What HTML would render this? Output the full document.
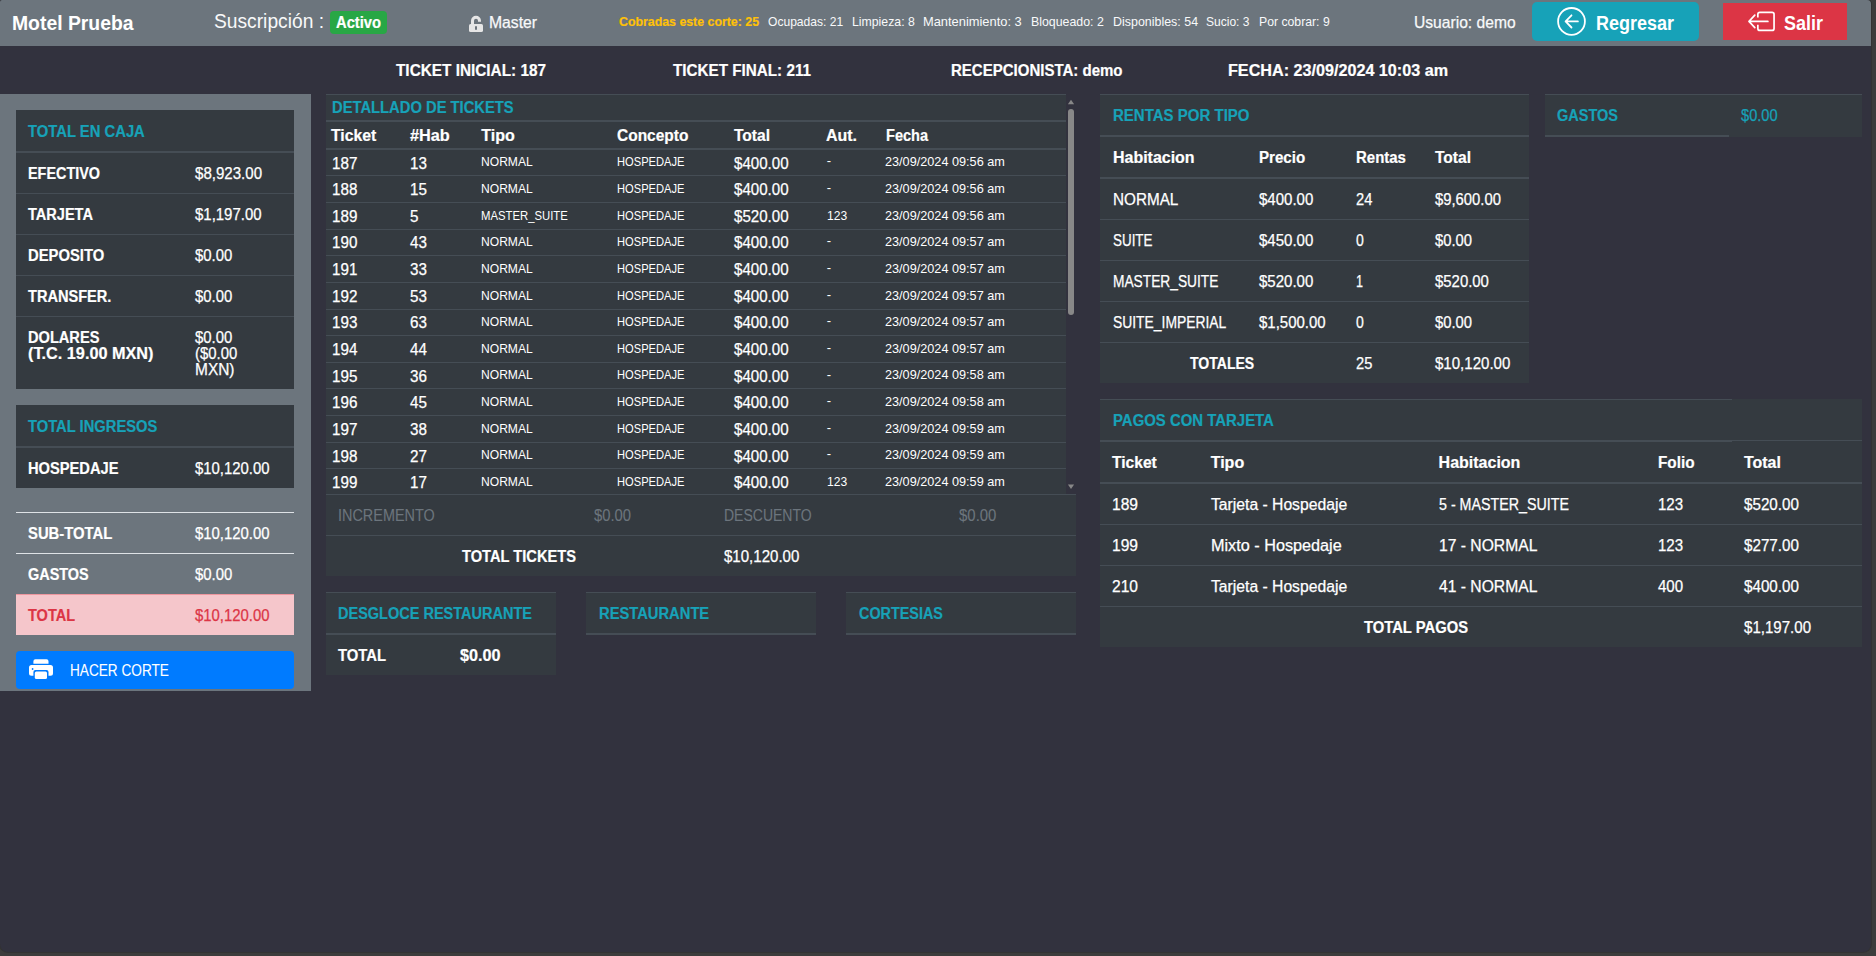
<!DOCTYPE html>
<html><head><meta charset="utf-8"><title>Corte</title>
<style>
html,body{margin:0;padding:0;}
body{width:1876px;height:956px;background:#3c3c3c;position:relative;overflow:hidden;font-family:"Liberation Sans",sans-serif;}
#win{position:absolute;left:0;top:0;width:1871px;height:952px;background:#32323e;border-radius:2px 4px 8px 8px;overflow:hidden;box-shadow:0 0 0 1px #333333;}
.r{position:absolute;}
.t{position:absolute;white-space:nowrap;line-height:1;transform-origin:0 0;}
</style></head><body><div id="win">
<div class="r" style="left:0px;top:0px;width:1871px;height:46px;background:#6c757d;"></div>
<div class="t" style="left:12.0px;top:13.00px;font-size:20px;font-weight:700;color:#fff;transform:scaleX(0.9676);">Motel Prueba</div>
<div class="t" style="left:214.0px;top:11.00px;font-size:20px;font-weight:400;color:#f8f9fa;transform:scaleX(0.9608);">Suscripción :</div>
<div class="r" style="left:330px;top:11px;width:57px;height:23px;background:#28a745;border-radius:4px;"></div>
<div class="t" style="left:335.6px;top:15.00px;font-size:16px;font-weight:700;color:#fff;transform:scaleX(0.9203);-webkit-text-stroke:0.2px #fff;">Activo</div>
<svg class="r" style="left:469px;top:15px" width="15" height="18" viewBox="0 0 15 18">
<path d="M3.5 9.5 V5.8 A3.5 3.5 0 0 1 10.5 5.8 V6.7" fill="none" stroke="#e6e6e6" stroke-width="3"/>
<rect x="0" y="9" width="14" height="8" rx="1.6" fill="#e6e6e6"/>
<rect x="6" y="11" width="2" height="4" rx="1" fill="#6c757d"/></svg>
<div class="t" style="left:489.0px;top:15.00px;font-size:16px;font-weight:400;color:#f8f9fa;transform:scaleX(0.9817);-webkit-text-stroke:0.25px #f8f9fa;">Master</div>
<div class="t" style="left:619.0px;top:15.00px;font-size:13px;font-weight:700;color:#ffc107;transform:scaleX(0.9499);-webkit-text-stroke:0.2px #ffc107;">Cobradas este corte: 25</div>
<div class="t" style="left:767.6px;top:15.00px;font-size:13px;font-weight:400;color:#f8f9fa;transform:scaleX(0.9291);">Ocupadas: 21</div>
<div class="t" style="left:851.6px;top:15.00px;font-size:13px;font-weight:400;color:#f8f9fa;transform:scaleX(0.9447);">Limpieza: 8</div>
<div class="t" style="left:923.2px;top:15.00px;font-size:13px;font-weight:400;color:#f8f9fa;transform:scaleX(0.9898);">Mantenimiento: 3</div>
<div class="t" style="left:1031.2px;top:15.00px;font-size:13px;font-weight:400;color:#f8f9fa;transform:scaleX(0.9502);">Bloqueado: 2</div>
<div class="t" style="left:1112.8px;top:15.00px;font-size:13px;font-weight:400;color:#f8f9fa;transform:scaleX(0.9575);">Disponibles: 54</div>
<div class="t" style="left:1206.0px;top:15.00px;font-size:13px;font-weight:400;color:#f8f9fa;transform:scaleX(0.9261);">Sucio: 3</div>
<div class="t" style="left:1258.5px;top:15.00px;font-size:13px;font-weight:400;color:#f8f9fa;transform:scaleX(0.9409);">Por cobrar: 9</div>
<div class="t" style="left:1414.4px;top:14.00px;font-size:17px;font-weight:400;color:#f8f9fa;transform:scaleX(0.9191);-webkit-text-stroke:0.25px #f8f9fa;">Usuario: demo</div>
<div class="r" style="left:1532px;top:2px;width:167px;height:39px;background:#17a2b8;border-radius:5px;"></div>
<svg class="r" style="left:1556px;top:6px" width="32" height="32" viewBox="0 0 32 32">
<circle cx="15.5" cy="15.4" r="13.4" fill="none" stroke="#fff" stroke-width="1.8"/>
<path d="M21.9 15.4 H9.6 M15.5 9.3 L9.6 15.4 L15.5 21.5" fill="none" stroke="#fff" stroke-width="1.8" stroke-linecap="round" stroke-linejoin="round"/></svg>
<div class="t" style="left:1596.0px;top:13.00px;font-size:20px;font-weight:700;color:#fff;transform:scaleX(0.8995);">Regresar</div>
<div class="r" style="left:1723px;top:3px;width:124px;height:37px;background:#dc3545;"></div>
<svg class="r" style="left:1746px;top:10px" width="32" height="24" viewBox="0 0 32 24">
<path d="M11.85 7.6 V4.35 A2 2 0 0 1 13.85 2.35 H26.05 A2 2 0 0 1 28.05 4.35 V18.45 A2 2 0 0 1 26.05 20.45 H13.85 A2 2 0 0 1 11.85 18.45 V14.8" fill="none" stroke="#fff" stroke-width="1.7"/>
<path d="M21.9 11.4 H3 M8.8 5.2 L3 11.4 L8.8 17.6" fill="none" stroke="#fff" stroke-width="1.7" stroke-linecap="round" stroke-linejoin="round"/></svg>
<div class="t" style="left:1784.0px;top:13.00px;font-size:20px;font-weight:700;color:#fff;transform:scaleX(0.8995);">Salir</div>
<div class="t" style="left:395.6px;top:63.00px;font-size:16px;font-weight:700;color:#fff;transform:scaleX(0.9587);-webkit-text-stroke:0.2px #fff;">TICKET INICIAL: 187</div>
<div class="t" style="left:672.6px;top:63.00px;font-size:16px;font-weight:700;color:#fff;transform:scaleX(0.9524);-webkit-text-stroke:0.2px #fff;">TICKET FINAL: 211</div>
<div class="t" style="left:950.5px;top:63.00px;font-size:16px;font-weight:700;color:#fff;transform:scaleX(0.9380);-webkit-text-stroke:0.2px #fff;">RECEPCIONISTA: demo</div>
<div class="t" style="left:1227.6px;top:63.00px;font-size:16px;font-weight:700;color:#fff;transform:scaleX(1.0097);-webkit-text-stroke:0.2px #fff;">FECHA: 23/09/2024 10:03 am</div>
<div class="r" style="left:0px;top:94px;width:311px;height:597px;background:#6c757d;"></div>
<div class="r" style="left:16px;top:110px;width:278px;height:279px;background:#343a40;"></div>
<div class="t" style="left:28.0px;top:124.00px;font-size:16px;font-weight:700;color:#17a2b8;transform:scaleX(0.9253);-webkit-text-stroke:0.2px #17a2b8;">TOTAL EN CAJA</div>
<div class="r" style="left:16px;top:151px;width:278px;height:2px;background:#454d55;"></div>
<div class="r" style="left:16px;top:193px;width:278px;height:1px;background:#454d55;"></div>
<div class="r" style="left:16px;top:234px;width:278px;height:1px;background:#454d55;"></div>
<div class="r" style="left:16px;top:275px;width:278px;height:1px;background:#454d55;"></div>
<div class="r" style="left:16px;top:316px;width:278px;height:1px;background:#454d55;"></div>
<div class="t" style="left:28.0px;top:166.00px;font-size:16px;font-weight:700;color:#fff;transform:scaleX(0.8999);-webkit-text-stroke:0.2px #fff;">EFECTIVO</div>
<div class="t" style="left:195.0px;top:166.00px;font-size:16px;font-weight:400;color:#fff;transform:scaleX(0.9414);-webkit-text-stroke:0.25px #fff;">$8,923.00</div>
<div class="t" style="left:28.0px;top:207.00px;font-size:16px;font-weight:700;color:#fff;transform:scaleX(0.9089);-webkit-text-stroke:0.2px #fff;">TARJETA</div>
<div class="t" style="left:195.0px;top:207.00px;font-size:16px;font-weight:400;color:#fff;transform:scaleX(0.9343);-webkit-text-stroke:0.25px #fff;">$1,197.00</div>
<div class="t" style="left:28.0px;top:248.00px;font-size:16px;font-weight:700;color:#fff;transform:scaleX(0.9249);-webkit-text-stroke:0.2px #fff;">DEPOSITO</div>
<div class="t" style="left:195.0px;top:248.00px;font-size:16px;font-weight:400;color:#fff;transform:scaleX(0.9317);-webkit-text-stroke:0.25px #fff;">$0.00</div>
<div class="t" style="left:28.0px;top:289.00px;font-size:16px;font-weight:700;color:#fff;transform:scaleX(0.9109);-webkit-text-stroke:0.2px #fff;">TRANSFER.</div>
<div class="t" style="left:195.0px;top:289.00px;font-size:16px;font-weight:400;color:#fff;transform:scaleX(0.9317);-webkit-text-stroke:0.25px #fff;">$0.00</div>
<div class="t" style="left:28.0px;top:330.00px;font-size:16px;font-weight:700;color:#fff;transform:scaleX(0.9127);-webkit-text-stroke:0.2px #fff;">DOLARES</div>
<div class="t" style="left:28.0px;top:346.00px;font-size:16px;font-weight:700;color:#fff;transform:scaleX(1.0155);-webkit-text-stroke:0.2px #fff;">(T.C. 19.00 MXN)</div>
<div class="t" style="left:195.0px;top:330.00px;font-size:16px;font-weight:400;color:#fff;transform:scaleX(0.9317);-webkit-text-stroke:0.25px #fff;">$0.00</div>
<div class="t" style="left:195.0px;top:346.00px;font-size:16px;font-weight:400;color:#fff;transform:scaleX(0.9303);-webkit-text-stroke:0.25px #fff;">($0.00</div>
<div class="t" style="left:195.0px;top:362.00px;font-size:16px;font-weight:400;color:#fff;transform:scaleX(0.9662);-webkit-text-stroke:0.25px #fff;">MXN)</div>
<div class="r" style="left:16px;top:405px;width:278px;height:83px;background:#343a40;"></div>
<div class="t" style="left:28.0px;top:419.00px;font-size:16px;font-weight:700;color:#17a2b8;transform:scaleX(0.9213);-webkit-text-stroke:0.2px #17a2b8;">TOTAL INGRESOS</div>
<div class="r" style="left:16px;top:446px;width:278px;height:2px;background:#454d55;"></div>
<div class="t" style="left:28.0px;top:461.00px;font-size:16px;font-weight:700;color:#fff;transform:scaleX(0.9169);-webkit-text-stroke:0.2px #fff;">HOSPEDAJE</div>
<div class="t" style="left:195.0px;top:461.00px;font-size:16px;font-weight:400;color:#fff;transform:scaleX(0.9304);-webkit-text-stroke:0.25px #fff;">$10,120.00</div>
<div class="r" style="left:16px;top:512px;width:278px;height:1px;background:#dee2e6;"></div>
<div class="r" style="left:16px;top:553px;width:278px;height:1px;background:#dee2e6;"></div>
<div class="t" style="left:28.0px;top:526.00px;font-size:16px;font-weight:700;color:#fff;transform:scaleX(0.9269);-webkit-text-stroke:0.2px #fff;">SUB-TOTAL</div>
<div class="t" style="left:195.0px;top:526.00px;font-size:16px;font-weight:400;color:#fff;transform:scaleX(0.9304);-webkit-text-stroke:0.25px #fff;">$10,120.00</div>
<div class="t" style="left:28.0px;top:567.00px;font-size:16px;font-weight:700;color:#fff;transform:scaleX(0.9023);-webkit-text-stroke:0.2px #fff;">GASTOS</div>
<div class="t" style="left:195.0px;top:567.00px;font-size:16px;font-weight:400;color:#fff;transform:scaleX(0.9317);-webkit-text-stroke:0.25px #fff;">$0.00</div>
<div class="r" style="left:16px;top:594px;width:278px;height:41px;background:#f5c6cb;border-top:1px solid #ed969e;box-sizing:border-box;"></div>
<div class="t" style="left:28.0px;top:608.00px;font-size:16px;font-weight:700;color:#dc3545;transform:scaleX(0.9066);-webkit-text-stroke:0.2px #dc3545;">TOTAL</div>
<div class="t" style="left:195.0px;top:608.00px;font-size:16px;font-weight:400;color:#dc3545;transform:scaleX(0.9304);-webkit-text-stroke:0.25px #dc3545;">$10,120.00</div>
<div class="r" style="left:16px;top:651px;width:278px;height:38px;background:#007bff;border-radius:4px;"></div>
<svg class="r" style="left:29px;top:659px" width="24" height="21" viewBox="0 0 24 21">
<path d="M4.4 4.7 V2.3 A2 2 0 0 1 6.4 0.3 H17.5 A2 2 0 0 1 19.5 2.3 V4.7 Z" fill="#fff"/>
<path d="M2.5 6.1 H21.5 A2.5 2.5 0 0 1 24 8.6 V14.3 A2.5 2.5 0 0 1 21.5 16.8 H19.5 V13 A2 2 0 0 0 17.5 11 H6.4 A2 2 0 0 0 4.4 13 V16.8 H2.5 A2.5 2.5 0 0 1 0 14.3 V8.6 A2.5 2.5 0 0 1 2.5 6.1 Z" fill="#fff"/>
<rect x="5.8" y="12.6" width="12.2" height="7.4" rx="1.5" fill="#fff"/>
<circle cx="3.6" cy="10" r="0.9" fill="#007bff"/></svg>
<div class="t" style="left:70.0px;top:663.00px;font-size:16px;font-weight:400;color:#fff;transform:scaleX(0.8514);-webkit-text-stroke:0.1px #fff;">HACER CORTE</div>
<div class="r" style="left:326px;top:94px;width:740px;height:400px;background:#343a40;"></div>
<div class="r" style="left:326px;top:94px;width:740px;height:1px;background:#454d55;"></div>
<div class="t" style="left:331.7px;top:100.00px;font-size:16px;font-weight:700;color:#17a2b8;transform:scaleX(0.9222);-webkit-text-stroke:0.2px #17a2b8;">DETALLADO DE TICKETS</div>
<div class="r" style="left:326px;top:120px;width:740px;height:2px;background:#454d55;"></div>
<div class="t" style="left:331.0px;top:128.00px;font-size:16px;font-weight:700;color:#fff;transform:scaleX(0.9837);-webkit-text-stroke:0.2px #fff;">Ticket</div>
<div class="t" style="left:409.7px;top:128.00px;font-size:16px;font-weight:700;color:#fff;transform:scaleX(1.0148);-webkit-text-stroke:0.2px #fff;">#Hab</div>
<div class="t" style="left:481.3px;top:128.00px;font-size:16px;font-weight:700;color:#fff;-webkit-text-stroke:0.2px #fff;">Tipo</div>
<div class="t" style="left:616.7px;top:128.00px;font-size:16px;font-weight:700;color:#fff;transform:scaleX(0.9679);-webkit-text-stroke:0.2px #fff;">Concepto</div>
<div class="t" style="left:733.5px;top:128.00px;font-size:16px;font-weight:700;color:#fff;transform:scaleX(0.9723);-webkit-text-stroke:0.2px #fff;">Total</div>
<div class="t" style="left:826.4px;top:128.00px;font-size:16px;font-weight:700;color:#fff;transform:scaleX(0.9968);-webkit-text-stroke:0.2px #fff;">Aut.</div>
<div class="t" style="left:885.5px;top:128.00px;font-size:16px;font-weight:700;color:#fff;transform:scaleX(0.9084);-webkit-text-stroke:0.2px #fff;">Fecha</div>
<div class="r" style="left:326px;top:148px;width:740px;height:2px;background:#454d55;"></div>
<div class="t" style="left:331.8px;top:156.00px;font-size:16px;font-weight:400;color:#fff;transform:scaleX(0.9500);-webkit-text-stroke:0.25px #fff;">187</div>
<div class="t" style="left:409.7px;top:156.00px;font-size:16px;font-weight:400;color:#fff;transform:scaleX(0.9500);-webkit-text-stroke:0.25px #fff;">13</div>
<div class="t" style="left:481.3px;top:155.00px;font-size:13px;font-weight:400;color:#fff;transform:scaleX(0.9300);">NORMAL</div>
<div class="t" style="left:616.7px;top:155.00px;font-size:13px;font-weight:400;color:#fff;transform:scaleX(0.8572);">HOSPEDAJE</div>
<div class="t" style="left:733.5px;top:156.00px;font-size:16px;font-weight:400;color:#fff;transform:scaleX(0.9441);-webkit-text-stroke:0.25px #fff;">$400.00</div>
<div class="t" style="left:826.8px;top:154.00px;font-size:13px;font-weight:400;color:#fff;">-</div>
<div class="t" style="left:884.8px;top:155.00px;font-size:13px;font-weight:400;color:#fff;transform:scaleX(0.9750);">23/09/2024 09:56 am</div>
<div class="r" style="left:326px;top:175px;width:740px;height:1px;background:#454d55;"></div>
<div class="t" style="left:331.8px;top:182.00px;font-size:16px;font-weight:400;color:#fff;transform:scaleX(0.9500);-webkit-text-stroke:0.25px #fff;">188</div>
<div class="t" style="left:409.7px;top:182.00px;font-size:16px;font-weight:400;color:#fff;transform:scaleX(0.9500);-webkit-text-stroke:0.25px #fff;">15</div>
<div class="t" style="left:481.3px;top:182.00px;font-size:13px;font-weight:400;color:#fff;transform:scaleX(0.9300);">NORMAL</div>
<div class="t" style="left:616.7px;top:182.00px;font-size:13px;font-weight:400;color:#fff;transform:scaleX(0.8572);">HOSPEDAJE</div>
<div class="t" style="left:733.5px;top:182.00px;font-size:16px;font-weight:400;color:#fff;transform:scaleX(0.9441);-webkit-text-stroke:0.25px #fff;">$400.00</div>
<div class="t" style="left:826.8px;top:181.00px;font-size:13px;font-weight:400;color:#fff;">-</div>
<div class="t" style="left:884.8px;top:182.00px;font-size:13px;font-weight:400;color:#fff;transform:scaleX(0.9750);">23/09/2024 09:56 am</div>
<div class="r" style="left:326px;top:202px;width:740px;height:1px;background:#454d55;"></div>
<div class="t" style="left:331.8px;top:209.00px;font-size:16px;font-weight:400;color:#fff;transform:scaleX(0.9500);-webkit-text-stroke:0.25px #fff;">189</div>
<div class="t" style="left:409.7px;top:209.00px;font-size:16px;font-weight:400;color:#fff;transform:scaleX(0.9500);-webkit-text-stroke:0.25px #fff;">5</div>
<div class="t" style="left:481.3px;top:209.00px;font-size:13px;font-weight:400;color:#fff;transform:scaleX(0.8700);">MASTER_SUITE</div>
<div class="t" style="left:616.7px;top:209.00px;font-size:13px;font-weight:400;color:#fff;transform:scaleX(0.8572);">HOSPEDAJE</div>
<div class="t" style="left:733.5px;top:209.00px;font-size:16px;font-weight:400;color:#fff;transform:scaleX(0.9441);-webkit-text-stroke:0.25px #fff;">$520.00</div>
<div class="t" style="left:826.8px;top:209.00px;font-size:13px;font-weight:400;color:#fff;transform:scaleX(0.9300);">123</div>
<div class="t" style="left:884.8px;top:209.00px;font-size:13px;font-weight:400;color:#fff;transform:scaleX(0.9750);">23/09/2024 09:56 am</div>
<div class="r" style="left:326px;top:229px;width:740px;height:1px;background:#454d55;"></div>
<div class="t" style="left:331.8px;top:235.00px;font-size:16px;font-weight:400;color:#fff;transform:scaleX(0.9500);-webkit-text-stroke:0.25px #fff;">190</div>
<div class="t" style="left:409.7px;top:235.00px;font-size:16px;font-weight:400;color:#fff;transform:scaleX(0.9500);-webkit-text-stroke:0.25px #fff;">43</div>
<div class="t" style="left:481.3px;top:235.00px;font-size:13px;font-weight:400;color:#fff;transform:scaleX(0.9300);">NORMAL</div>
<div class="t" style="left:616.7px;top:235.00px;font-size:13px;font-weight:400;color:#fff;transform:scaleX(0.8572);">HOSPEDAJE</div>
<div class="t" style="left:733.5px;top:235.00px;font-size:16px;font-weight:400;color:#fff;transform:scaleX(0.9441);-webkit-text-stroke:0.25px #fff;">$400.00</div>
<div class="t" style="left:826.8px;top:234.00px;font-size:13px;font-weight:400;color:#fff;">-</div>
<div class="t" style="left:884.8px;top:235.00px;font-size:13px;font-weight:400;color:#fff;transform:scaleX(0.9750);">23/09/2024 09:57 am</div>
<div class="r" style="left:326px;top:255px;width:740px;height:1px;background:#454d55;"></div>
<div class="t" style="left:331.8px;top:262.00px;font-size:16px;font-weight:400;color:#fff;transform:scaleX(0.9500);-webkit-text-stroke:0.25px #fff;">191</div>
<div class="t" style="left:409.7px;top:262.00px;font-size:16px;font-weight:400;color:#fff;transform:scaleX(0.9500);-webkit-text-stroke:0.25px #fff;">33</div>
<div class="t" style="left:481.3px;top:262.00px;font-size:13px;font-weight:400;color:#fff;transform:scaleX(0.9300);">NORMAL</div>
<div class="t" style="left:616.7px;top:262.00px;font-size:13px;font-weight:400;color:#fff;transform:scaleX(0.8572);">HOSPEDAJE</div>
<div class="t" style="left:733.5px;top:262.00px;font-size:16px;font-weight:400;color:#fff;transform:scaleX(0.9441);-webkit-text-stroke:0.25px #fff;">$400.00</div>
<div class="t" style="left:826.8px;top:261.00px;font-size:13px;font-weight:400;color:#fff;">-</div>
<div class="t" style="left:884.8px;top:262.00px;font-size:13px;font-weight:400;color:#fff;transform:scaleX(0.9750);">23/09/2024 09:57 am</div>
<div class="r" style="left:326px;top:282px;width:740px;height:1px;background:#454d55;"></div>
<div class="t" style="left:331.8px;top:289.00px;font-size:16px;font-weight:400;color:#fff;transform:scaleX(0.9500);-webkit-text-stroke:0.25px #fff;">192</div>
<div class="t" style="left:409.7px;top:289.00px;font-size:16px;font-weight:400;color:#fff;transform:scaleX(0.9500);-webkit-text-stroke:0.25px #fff;">53</div>
<div class="t" style="left:481.3px;top:289.00px;font-size:13px;font-weight:400;color:#fff;transform:scaleX(0.9300);">NORMAL</div>
<div class="t" style="left:616.7px;top:289.00px;font-size:13px;font-weight:400;color:#fff;transform:scaleX(0.8572);">HOSPEDAJE</div>
<div class="t" style="left:733.5px;top:289.00px;font-size:16px;font-weight:400;color:#fff;transform:scaleX(0.9441);-webkit-text-stroke:0.25px #fff;">$400.00</div>
<div class="t" style="left:826.8px;top:288.00px;font-size:13px;font-weight:400;color:#fff;">-</div>
<div class="t" style="left:884.8px;top:289.00px;font-size:13px;font-weight:400;color:#fff;transform:scaleX(0.9750);">23/09/2024 09:57 am</div>
<div class="r" style="left:326px;top:309px;width:740px;height:1px;background:#454d55;"></div>
<div class="t" style="left:331.8px;top:315.00px;font-size:16px;font-weight:400;color:#fff;transform:scaleX(0.9500);-webkit-text-stroke:0.25px #fff;">193</div>
<div class="t" style="left:409.7px;top:315.00px;font-size:16px;font-weight:400;color:#fff;transform:scaleX(0.9500);-webkit-text-stroke:0.25px #fff;">63</div>
<div class="t" style="left:481.3px;top:315.00px;font-size:13px;font-weight:400;color:#fff;transform:scaleX(0.9300);">NORMAL</div>
<div class="t" style="left:616.7px;top:315.00px;font-size:13px;font-weight:400;color:#fff;transform:scaleX(0.8572);">HOSPEDAJE</div>
<div class="t" style="left:733.5px;top:315.00px;font-size:16px;font-weight:400;color:#fff;transform:scaleX(0.9441);-webkit-text-stroke:0.25px #fff;">$400.00</div>
<div class="t" style="left:826.8px;top:314.00px;font-size:13px;font-weight:400;color:#fff;">-</div>
<div class="t" style="left:884.8px;top:315.00px;font-size:13px;font-weight:400;color:#fff;transform:scaleX(0.9750);">23/09/2024 09:57 am</div>
<div class="r" style="left:326px;top:335px;width:740px;height:1px;background:#454d55;"></div>
<div class="t" style="left:331.8px;top:342.00px;font-size:16px;font-weight:400;color:#fff;transform:scaleX(0.9500);-webkit-text-stroke:0.25px #fff;">194</div>
<div class="t" style="left:409.7px;top:342.00px;font-size:16px;font-weight:400;color:#fff;transform:scaleX(0.9500);-webkit-text-stroke:0.25px #fff;">44</div>
<div class="t" style="left:481.3px;top:342.00px;font-size:13px;font-weight:400;color:#fff;transform:scaleX(0.9300);">NORMAL</div>
<div class="t" style="left:616.7px;top:342.00px;font-size:13px;font-weight:400;color:#fff;transform:scaleX(0.8572);">HOSPEDAJE</div>
<div class="t" style="left:733.5px;top:342.00px;font-size:16px;font-weight:400;color:#fff;transform:scaleX(0.9441);-webkit-text-stroke:0.25px #fff;">$400.00</div>
<div class="t" style="left:826.8px;top:341.00px;font-size:13px;font-weight:400;color:#fff;">-</div>
<div class="t" style="left:884.8px;top:342.00px;font-size:13px;font-weight:400;color:#fff;transform:scaleX(0.9750);">23/09/2024 09:57 am</div>
<div class="r" style="left:326px;top:362px;width:740px;height:1px;background:#454d55;"></div>
<div class="t" style="left:331.8px;top:369.00px;font-size:16px;font-weight:400;color:#fff;transform:scaleX(0.9500);-webkit-text-stroke:0.25px #fff;">195</div>
<div class="t" style="left:409.7px;top:369.00px;font-size:16px;font-weight:400;color:#fff;transform:scaleX(0.9500);-webkit-text-stroke:0.25px #fff;">36</div>
<div class="t" style="left:481.3px;top:368.00px;font-size:13px;font-weight:400;color:#fff;transform:scaleX(0.9300);">NORMAL</div>
<div class="t" style="left:616.7px;top:368.00px;font-size:13px;font-weight:400;color:#fff;transform:scaleX(0.8572);">HOSPEDAJE</div>
<div class="t" style="left:733.5px;top:369.00px;font-size:16px;font-weight:400;color:#fff;transform:scaleX(0.9441);-webkit-text-stroke:0.25px #fff;">$400.00</div>
<div class="t" style="left:826.8px;top:368.00px;font-size:13px;font-weight:400;color:#fff;">-</div>
<div class="t" style="left:884.8px;top:368.00px;font-size:13px;font-weight:400;color:#fff;transform:scaleX(0.9750);">23/09/2024 09:58 am</div>
<div class="r" style="left:326px;top:388px;width:740px;height:1px;background:#454d55;"></div>
<div class="t" style="left:331.8px;top:395.00px;font-size:16px;font-weight:400;color:#fff;transform:scaleX(0.9500);-webkit-text-stroke:0.25px #fff;">196</div>
<div class="t" style="left:409.7px;top:395.00px;font-size:16px;font-weight:400;color:#fff;transform:scaleX(0.9500);-webkit-text-stroke:0.25px #fff;">45</div>
<div class="t" style="left:481.3px;top:395.00px;font-size:13px;font-weight:400;color:#fff;transform:scaleX(0.9300);">NORMAL</div>
<div class="t" style="left:616.7px;top:395.00px;font-size:13px;font-weight:400;color:#fff;transform:scaleX(0.8572);">HOSPEDAJE</div>
<div class="t" style="left:733.5px;top:395.00px;font-size:16px;font-weight:400;color:#fff;transform:scaleX(0.9441);-webkit-text-stroke:0.25px #fff;">$400.00</div>
<div class="t" style="left:826.8px;top:394.00px;font-size:13px;font-weight:400;color:#fff;">-</div>
<div class="t" style="left:884.8px;top:395.00px;font-size:13px;font-weight:400;color:#fff;transform:scaleX(0.9750);">23/09/2024 09:58 am</div>
<div class="r" style="left:326px;top:415px;width:740px;height:1px;background:#454d55;"></div>
<div class="t" style="left:331.8px;top:422.00px;font-size:16px;font-weight:400;color:#fff;transform:scaleX(0.9500);-webkit-text-stroke:0.25px #fff;">197</div>
<div class="t" style="left:409.7px;top:422.00px;font-size:16px;font-weight:400;color:#fff;transform:scaleX(0.9500);-webkit-text-stroke:0.25px #fff;">38</div>
<div class="t" style="left:481.3px;top:422.00px;font-size:13px;font-weight:400;color:#fff;transform:scaleX(0.9300);">NORMAL</div>
<div class="t" style="left:616.7px;top:422.00px;font-size:13px;font-weight:400;color:#fff;transform:scaleX(0.8572);">HOSPEDAJE</div>
<div class="t" style="left:733.5px;top:422.00px;font-size:16px;font-weight:400;color:#fff;transform:scaleX(0.9441);-webkit-text-stroke:0.25px #fff;">$400.00</div>
<div class="t" style="left:826.8px;top:421.00px;font-size:13px;font-weight:400;color:#fff;">-</div>
<div class="t" style="left:884.8px;top:422.00px;font-size:13px;font-weight:400;color:#fff;transform:scaleX(0.9750);">23/09/2024 09:59 am</div>
<div class="r" style="left:326px;top:442px;width:740px;height:1px;background:#454d55;"></div>
<div class="t" style="left:331.8px;top:449.00px;font-size:16px;font-weight:400;color:#fff;transform:scaleX(0.9500);-webkit-text-stroke:0.25px #fff;">198</div>
<div class="t" style="left:409.7px;top:449.00px;font-size:16px;font-weight:400;color:#fff;transform:scaleX(0.9500);-webkit-text-stroke:0.25px #fff;">27</div>
<div class="t" style="left:481.3px;top:448.00px;font-size:13px;font-weight:400;color:#fff;transform:scaleX(0.9300);">NORMAL</div>
<div class="t" style="left:616.7px;top:448.00px;font-size:13px;font-weight:400;color:#fff;transform:scaleX(0.8572);">HOSPEDAJE</div>
<div class="t" style="left:733.5px;top:449.00px;font-size:16px;font-weight:400;color:#fff;transform:scaleX(0.9441);-webkit-text-stroke:0.25px #fff;">$400.00</div>
<div class="t" style="left:826.8px;top:447.00px;font-size:13px;font-weight:400;color:#fff;">-</div>
<div class="t" style="left:884.8px;top:448.00px;font-size:13px;font-weight:400;color:#fff;transform:scaleX(0.9750);">23/09/2024 09:59 am</div>
<div class="r" style="left:326px;top:468px;width:740px;height:1px;background:#454d55;"></div>
<div class="t" style="left:331.8px;top:475.00px;font-size:16px;font-weight:400;color:#fff;transform:scaleX(0.9500);-webkit-text-stroke:0.25px #fff;">199</div>
<div class="t" style="left:409.7px;top:475.00px;font-size:16px;font-weight:400;color:#fff;transform:scaleX(0.9500);-webkit-text-stroke:0.25px #fff;">17</div>
<div class="t" style="left:481.3px;top:475.00px;font-size:13px;font-weight:400;color:#fff;transform:scaleX(0.9300);">NORMAL</div>
<div class="t" style="left:616.7px;top:475.00px;font-size:13px;font-weight:400;color:#fff;transform:scaleX(0.8572);">HOSPEDAJE</div>
<div class="t" style="left:733.5px;top:475.00px;font-size:16px;font-weight:400;color:#fff;transform:scaleX(0.9441);-webkit-text-stroke:0.25px #fff;">$400.00</div>
<div class="t" style="left:826.8px;top:475.00px;font-size:13px;font-weight:400;color:#fff;transform:scaleX(0.9300);">123</div>
<div class="t" style="left:884.8px;top:475.00px;font-size:13px;font-weight:400;color:#fff;transform:scaleX(0.9750);">23/09/2024 09:59 am</div>
<svg class="r" style="left:1066px;top:94px" width="10" height="400" viewBox="0 0 10 400"><path d="M1.9 10.2 L5 5.7 L8.1 10.2 Z" fill="#888"/><rect x="2" y="15" width="6" height="206" rx="3" fill="#888"/><path d="M1.9 390.6 L5 395.1 L8.1 390.6 Z" fill="#888"/></svg>
<div class="r" style="left:326px;top:494px;width:750px;height:82px;background:#343a40;"></div>
<div class="r" style="left:326px;top:494px;width:750px;height:1px;background:#454d55;"></div>
<div class="r" style="left:326px;top:535px;width:750px;height:1px;background:#454d55;"></div>
<div class="t" style="left:338.4px;top:508.00px;font-size:16px;font-weight:400;color:#6c757d;transform:scaleX(0.9015);-webkit-text-stroke:0.1px #6c757d;">INCREMENTO</div>
<div class="t" style="left:594.0px;top:508.00px;font-size:16px;font-weight:400;color:#6c757d;transform:scaleX(0.9267);-webkit-text-stroke:0.1px #6c757d;">$0.00</div>
<div class="t" style="left:723.5px;top:508.00px;font-size:16px;font-weight:400;color:#6c757d;transform:scaleX(0.8746);-webkit-text-stroke:0.1px #6c757d;">DESCUENTO</div>
<div class="t" style="left:958.8px;top:508.00px;font-size:16px;font-weight:400;color:#6c757d;transform:scaleX(0.9342);-webkit-text-stroke:0.1px #6c757d;">$0.00</div>
<div class="t" style="left:461.5px;top:549.00px;font-size:16px;font-weight:700;color:#fff;transform:scaleX(0.9161);-webkit-text-stroke:0.2px #fff;">TOTAL TICKETS</div>
<div class="t" style="left:723.5px;top:549.00px;font-size:16px;font-weight:400;color:#fff;transform:scaleX(0.9404);-webkit-text-stroke:0.25px #fff;">$10,120.00</div>
<div class="r" style="left:326px;top:592px;width:230px;height:83px;background:#343a40;"></div>
<div class="r" style="left:326px;top:592px;width:230px;height:1px;background:#454d55;"></div>
<div class="r" style="left:326px;top:633px;width:230px;height:2px;background:#454d55;"></div>
<div class="t" style="left:338.4px;top:606.00px;font-size:16px;font-weight:700;color:#17a2b8;transform:scaleX(0.9068);-webkit-text-stroke:0.2px #17a2b8;">DESGLOCE RESTAURANTE</div>
<div class="t" style="left:338.4px;top:648.00px;font-size:16px;font-weight:700;color:#fff;transform:scaleX(0.9259);-webkit-text-stroke:0.2px #fff;">TOTAL</div>
<div class="t" style="left:459.5px;top:648.00px;font-size:16px;font-weight:700;color:#fff;transform:scaleX(1.0116);-webkit-text-stroke:0.2px #fff;">$0.00</div>
<div class="r" style="left:586px;top:592px;width:230px;height:43px;background:#343a40;"></div>
<div class="r" style="left:586px;top:592px;width:230px;height:1px;background:#454d55;"></div>
<div class="r" style="left:586px;top:633px;width:230px;height:2px;background:#454d55;"></div>
<div class="t" style="left:598.6px;top:606.00px;font-size:16px;font-weight:700;color:#17a2b8;transform:scaleX(0.9206);-webkit-text-stroke:0.2px #17a2b8;">RESTAURANTE</div>
<div class="r" style="left:846px;top:592px;width:230px;height:43px;background:#343a40;"></div>
<div class="r" style="left:846px;top:592px;width:230px;height:1px;background:#454d55;"></div>
<div class="r" style="left:846px;top:633px;width:230px;height:2px;background:#454d55;"></div>
<div class="t" style="left:858.5px;top:606.00px;font-size:16px;font-weight:700;color:#17a2b8;transform:scaleX(0.8988);-webkit-text-stroke:0.2px #17a2b8;">CORTESIAS</div>
<div class="r" style="left:1100px;top:94px;width:429px;height:289px;background:#343a40;"></div>
<div class="r" style="left:1100px;top:94px;width:429px;height:1px;background:#454d55;"></div>
<div class="t" style="left:1112.6px;top:108.00px;font-size:16px;font-weight:700;color:#17a2b8;transform:scaleX(0.9382);-webkit-text-stroke:0.2px #17a2b8;">RENTAS POR TIPO</div>
<div class="r" style="left:1100px;top:135px;width:429px;height:2px;background:#454d55;"></div>
<div class="t" style="left:1112.6px;top:150.00px;font-size:16px;font-weight:700;color:#fff;transform:scaleX(0.9978);-webkit-text-stroke:0.2px #fff;">Habitacion</div>
<div class="t" style="left:1259.4px;top:150.00px;font-size:16px;font-weight:700;color:#fff;transform:scaleX(0.9445);-webkit-text-stroke:0.2px #fff;">Precio</div>
<div class="t" style="left:1356.1px;top:150.00px;font-size:16px;font-weight:700;color:#fff;transform:scaleX(0.9354);-webkit-text-stroke:0.2px #fff;">Rentas</div>
<div class="t" style="left:1435.2px;top:150.00px;font-size:16px;font-weight:700;color:#fff;transform:scaleX(0.9723);-webkit-text-stroke:0.2px #fff;">Total</div>
<div class="r" style="left:1100px;top:177px;width:429px;height:2px;background:#454d55;"></div>
<div class="r" style="left:1100px;top:219px;width:429px;height:1px;background:#454d55;"></div>
<div class="r" style="left:1100px;top:260px;width:429px;height:1px;background:#454d55;"></div>
<div class="r" style="left:1100px;top:301px;width:429px;height:1px;background:#454d55;"></div>
<div class="r" style="left:1100px;top:342px;width:429px;height:1px;background:#454d55;"></div>
<div class="t" style="left:1112.6px;top:192.00px;font-size:16px;font-weight:400;color:#fff;transform:scaleX(0.9539);-webkit-text-stroke:0.25px #fff;">NORMAL</div>
<div class="t" style="left:1259.4px;top:192.00px;font-size:16px;font-weight:400;color:#fff;transform:scaleX(0.9390);-webkit-text-stroke:0.25px #fff;">$400.00</div>
<div class="t" style="left:1356.1px;top:192.00px;font-size:16px;font-weight:400;color:#fff;transform:scaleX(0.9160);-webkit-text-stroke:0.25px #fff;">24</div>
<div class="t" style="left:1435.2px;top:192.00px;font-size:16px;font-weight:400;color:#fff;transform:scaleX(0.9259);-webkit-text-stroke:0.25px #fff;">$9,600.00</div>
<div class="t" style="left:1112.6px;top:233.00px;font-size:16px;font-weight:400;color:#fff;transform:scaleX(0.8383);-webkit-text-stroke:0.25px #fff;">SUITE</div>
<div class="t" style="left:1259.4px;top:233.00px;font-size:16px;font-weight:400;color:#fff;transform:scaleX(0.9390);-webkit-text-stroke:0.25px #fff;">$450.00</div>
<div class="t" style="left:1356.1px;top:233.00px;font-size:16px;font-weight:400;color:#fff;transform:scaleX(0.8767);-webkit-text-stroke:0.25px #fff;">0</div>
<div class="t" style="left:1435.2px;top:233.00px;font-size:16px;font-weight:400;color:#fff;transform:scaleX(0.9242);-webkit-text-stroke:0.25px #fff;">$0.00</div>
<div class="t" style="left:1112.6px;top:274.00px;font-size:16px;font-weight:400;color:#fff;transform:scaleX(0.8591);-webkit-text-stroke:0.25px #fff;">MASTER_SUITE</div>
<div class="t" style="left:1259.4px;top:274.00px;font-size:16px;font-weight:400;color:#fff;transform:scaleX(0.9390);-webkit-text-stroke:0.25px #fff;">$520.00</div>
<div class="t" style="left:1356.1px;top:274.00px;font-size:16px;font-weight:400;color:#fff;transform:scaleX(0.7867);-webkit-text-stroke:0.25px #fff;">1</div>
<div class="t" style="left:1435.2px;top:274.00px;font-size:16px;font-weight:400;color:#fff;transform:scaleX(0.9320);-webkit-text-stroke:0.25px #fff;">$520.00</div>
<div class="t" style="left:1112.6px;top:315.00px;font-size:16px;font-weight:400;color:#fff;transform:scaleX(0.8669);-webkit-text-stroke:0.25px #fff;">SUITE_IMPERIAL</div>
<div class="t" style="left:1259.4px;top:315.00px;font-size:16px;font-weight:400;color:#fff;transform:scaleX(0.9358);-webkit-text-stroke:0.25px #fff;">$1,500.00</div>
<div class="t" style="left:1356.1px;top:315.00px;font-size:16px;font-weight:400;color:#fff;transform:scaleX(0.8767);-webkit-text-stroke:0.25px #fff;">0</div>
<div class="t" style="left:1435.2px;top:315.00px;font-size:16px;font-weight:400;color:#fff;transform:scaleX(0.9242);-webkit-text-stroke:0.25px #fff;">$0.00</div>
<div class="t" style="left:1189.8px;top:356.00px;font-size:16px;font-weight:700;color:#fff;transform:scaleX(0.8772);-webkit-text-stroke:0.2px #fff;">TOTALES</div>
<div class="t" style="left:1356.1px;top:356.00px;font-size:16px;font-weight:400;color:#fff;transform:scaleX(0.9160);-webkit-text-stroke:0.25px #fff;">25</div>
<div class="t" style="left:1435.2px;top:356.00px;font-size:16px;font-weight:400;color:#fff;transform:scaleX(0.9404);-webkit-text-stroke:0.25px #fff;">$10,120.00</div>
<div class="r" style="left:1545px;top:94px;width:317px;height:43px;background:#343a40;"></div>
<div class="r" style="left:1545px;top:94px;width:317px;height:1px;background:#454d55;"></div>
<div class="r" style="left:1545px;top:135px;width:184px;height:2px;background:#454d55;"></div>
<div class="t" style="left:1556.7px;top:108.00px;font-size:16px;font-weight:700;color:#17a2b8;transform:scaleX(0.9068);-webkit-text-stroke:0.2px #17a2b8;">GASTOS</div>
<div class="t" style="left:1741.2px;top:108.00px;font-size:16px;font-weight:400;color:#17a2b8;transform:scaleX(0.9142);-webkit-text-stroke:0.25px #17a2b8;">$0.00</div>
<div class="r" style="left:1100px;top:399px;width:762px;height:248px;background:#343a40;"></div>
<div class="r" style="left:1100px;top:399px;width:632px;height:1px;background:#454d55;"></div>
<div class="t" style="left:1112.6px;top:413.00px;font-size:16px;font-weight:700;color:#17a2b8;transform:scaleX(0.9330);-webkit-text-stroke:0.2px #17a2b8;">PAGOS CON TARJETA</div>
<div class="r" style="left:1100px;top:440px;width:632px;height:2px;background:#454d55;"></div>
<div class="r" style="left:1732px;top:440px;width:130px;height:1px;background:#454d55;"></div>
<div class="t" style="left:1112.2px;top:455.00px;font-size:16px;font-weight:700;color:#fff;transform:scaleX(0.9750);-webkit-text-stroke:0.2px #fff;">Ticket</div>
<div class="t" style="left:1210.7px;top:455.00px;font-size:16px;font-weight:700;color:#fff;-webkit-text-stroke:0.2px #fff;">Tipo</div>
<div class="t" style="left:1438.6px;top:455.00px;font-size:16px;font-weight:700;color:#fff;-webkit-text-stroke:0.2px #fff;">Habitacion</div>
<div class="t" style="left:1657.6px;top:455.00px;font-size:16px;font-weight:700;color:#fff;transform:scaleX(0.9553);-webkit-text-stroke:0.2px #fff;">Folio</div>
<div class="t" style="left:1744.4px;top:455.00px;font-size:16px;font-weight:700;color:#fff;transform:scaleX(0.9939);-webkit-text-stroke:0.2px #fff;">Total</div>
<div class="r" style="left:1100px;top:482px;width:762px;height:2px;background:#454d55;"></div>
<div class="r" style="left:1100px;top:524px;width:762px;height:1px;background:#454d55;"></div>
<div class="r" style="left:1100px;top:565px;width:762px;height:1px;background:#454d55;"></div>
<div class="r" style="left:1100px;top:606px;width:762px;height:1px;background:#454d55;"></div>
<div class="t" style="left:1112.2px;top:497.00px;font-size:16px;font-weight:400;color:#fff;transform:scaleX(0.9741);-webkit-text-stroke:0.25px #fff;">189</div>
<div class="t" style="left:1210.7px;top:497.00px;font-size:16px;font-weight:400;color:#fff;transform:scaleX(0.9810);-webkit-text-stroke:0.25px #fff;">Tarjeta - Hospedaje</div>
<div class="t" style="left:1438.6px;top:497.00px;font-size:16px;font-weight:400;color:#fff;transform:scaleX(0.8909);-webkit-text-stroke:0.25px #fff;">5 - MASTER_SUITE</div>
<div class="t" style="left:1657.6px;top:497.00px;font-size:16px;font-weight:400;color:#fff;transform:scaleX(0.9403);-webkit-text-stroke:0.25px #fff;">123</div>
<div class="t" style="left:1744.4px;top:497.00px;font-size:16px;font-weight:400;color:#fff;transform:scaleX(0.9493);-webkit-text-stroke:0.25px #fff;">$520.00</div>
<div class="t" style="left:1112.2px;top:538.00px;font-size:16px;font-weight:400;color:#fff;transform:scaleX(0.9741);-webkit-text-stroke:0.25px #fff;">199</div>
<div class="t" style="left:1210.7px;top:538.00px;font-size:16px;font-weight:400;color:#fff;transform:scaleX(1.0137);-webkit-text-stroke:0.25px #fff;">Mixto - Hospedaje</div>
<div class="t" style="left:1438.6px;top:538.00px;font-size:16px;font-weight:400;color:#fff;transform:scaleX(0.9794);-webkit-text-stroke:0.25px #fff;">17 - NORMAL</div>
<div class="t" style="left:1657.6px;top:538.00px;font-size:16px;font-weight:400;color:#fff;transform:scaleX(0.9403);-webkit-text-stroke:0.25px #fff;">123</div>
<div class="t" style="left:1744.4px;top:538.00px;font-size:16px;font-weight:400;color:#fff;transform:scaleX(0.9493);-webkit-text-stroke:0.25px #fff;">$277.00</div>
<div class="t" style="left:1112.2px;top:579.00px;font-size:16px;font-weight:400;color:#fff;transform:scaleX(0.9741);-webkit-text-stroke:0.25px #fff;">210</div>
<div class="t" style="left:1210.7px;top:579.00px;font-size:16px;font-weight:400;color:#fff;transform:scaleX(0.9810);-webkit-text-stroke:0.25px #fff;">Tarjeta - Hospedaje</div>
<div class="t" style="left:1438.6px;top:579.00px;font-size:16px;font-weight:400;color:#fff;transform:scaleX(0.9794);-webkit-text-stroke:0.25px #fff;">41 - NORMAL</div>
<div class="t" style="left:1657.6px;top:579.00px;font-size:16px;font-weight:400;color:#fff;transform:scaleX(0.9403);-webkit-text-stroke:0.25px #fff;">400</div>
<div class="t" style="left:1744.4px;top:579.00px;font-size:16px;font-weight:400;color:#fff;transform:scaleX(0.9493);-webkit-text-stroke:0.25px #fff;">$400.00</div>
<div class="t" style="left:1364.4px;top:620.00px;font-size:16px;font-weight:700;color:#fff;transform:scaleX(0.9236);-webkit-text-stroke:0.2px #fff;">TOTAL PAGOS</div>
<div class="t" style="left:1744.4px;top:620.00px;font-size:16px;font-weight:400;color:#fff;transform:scaleX(0.9414);-webkit-text-stroke:0.25px #fff;">$1,197.00</div>
</div></body></html>
